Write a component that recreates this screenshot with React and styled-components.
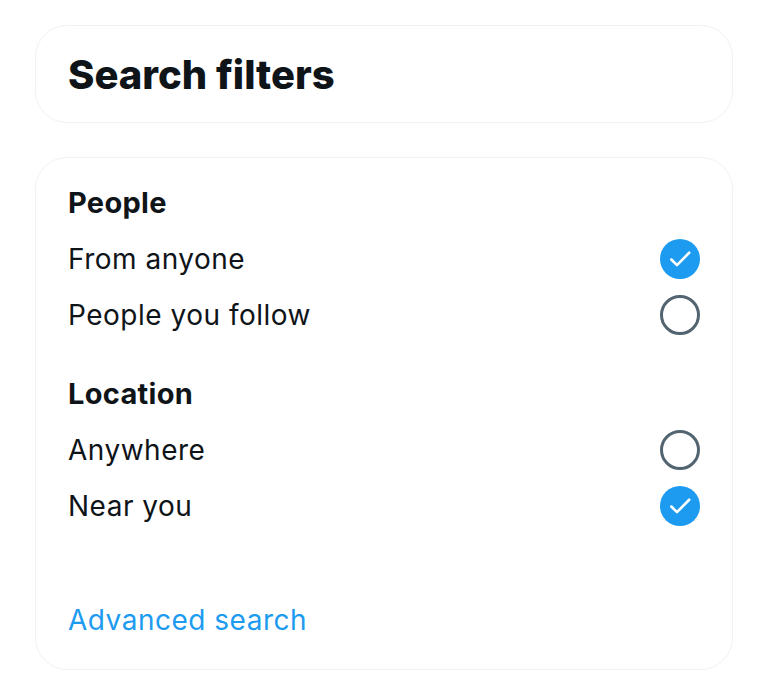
import React from 'react'
import styled, { createGlobalStyle } from 'styled-components'

const GlobalStyle = createGlobalStyle`
  body {
    margin: 0;
    background: #fff;
    font-family: Inter, "Noto Sans", sans-serif;
    color: #0f1419;
  }
`

const Page = styled.div`
  width: 698px;
  padding: 25px 0 0 35px;
  display: flex;
  flex-direction: column;
  gap: 34px;
`

const Card = styled.div`
  border: 1.5px solid #eff3f4;
  border-radius: 32px;
  box-sizing: border-box;
`

const Header = styled(Card)`
  height: 98px;
  display: flex;
  align-items: center;
  padding: 0 32px;
`

const Title = styled.h1`
  margin: 0;
  font-size: 40px;
  font-weight: 800;
  letter-spacing: 0;
`

const Filters = styled(Card)`
  height: 513px;
  padding: 26px 32px 0 32px;
  display: flex;
  flex-direction: column;
`

const Section = styled.div`
  display: flex;
  flex-direction: column;
  margin-bottom: 32px;
`

const SectionTitle = styled.h2`
  margin: 0 0 9px 0;
  font-size: 29px;
  font-weight: 700;
  line-height: 38px;
  letter-spacing: 0.3px;
`

const Row = styled.label`
  display: flex;
  align-items: center;
  justify-content: space-between;
  height: 56px;
  font-size: 28px;
  letter-spacing: 0.5px;
  cursor: pointer;
`

const Radio = styled.span`
  width: 40px;
  height: 40px;
  box-sizing: border-box;
  border-radius: 50%;
  display: flex;
  align-items: center;
  justify-content: center;
  border: ${(p) => (p.checked ? 'none' : '3px solid #536471')};
  background: ${(p) => (p.checked ? '#1d9bf0' : 'transparent')};
`

const Link = styled.a`
  margin-top: auto;
  margin-bottom: 32px;
  font-size: 28px;
  letter-spacing: 0.5px;
  color: #1d9bf0;
  text-decoration: none;
`

const sections = [
  {
    title: 'People',
    options: [
      { label: 'From anyone', checked: true },
      { label: 'People you follow', checked: false },
    ],
  },
  {
    title: 'Location',
    options: [
      { label: 'Anywhere', checked: false },
      { label: 'Near you', checked: true },
    ],
  },
]

const Check = () => (
  <svg width="26" height="26" viewBox="0 0 24 24">
    <path
      d="M4 12.5l5.2 5.2L20.5 6.2"
      fill="none"
      stroke="#fff"
      strokeWidth="2.4"
      strokeLinecap="round"
      strokeLinejoin="round"
    />
  </svg>
)

const App = () => (
  <>
    <GlobalStyle />
    <Page>
      <Header>
        <Title>Search filters</Title>
      </Header>
      <Filters>
        {sections.map((section) => (
          <Section key={section.title}>
            <SectionTitle>{section.title}</SectionTitle>
            {section.options.map((option) => (
              <Row key={option.label}>
                {option.label}
                <Radio checked={option.checked}>
                  {option.checked && <Check />}
                </Radio>
              </Row>
            ))}
          </Section>
        ))}
        <Link href="#">Advanced search</Link>
      </Filters>
    </Page>
  </>
)

export default App
